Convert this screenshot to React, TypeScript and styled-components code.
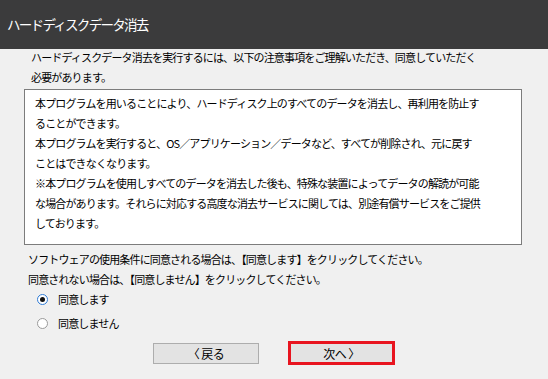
import * as React from "react";
import styled, { createGlobalStyle } from "styled-components";

const GlobalStyle = createGlobalStyle`
  html, body {
    margin: 0;
    padding: 0;
    background: #f0f0f0;
  }
  body {
    font-family: "Noto Sans CJK JP", "Liberation Sans", sans-serif;
    color: #000;
  }
`;

const Window = styled.div`
  width: 548px;
  height: 379px;
  display: flex;
  flex-direction: column;
  background: #f0f0f0;
  overflow: hidden;
`;

const TitleBar = styled.div`
  height: 49px;
  flex: none;
  display: flex;
  align-items: center;
  padding: 0 0 1px 7px;
  box-sizing: border-box;
  background: #3b3b3c;
  color: #fff;
  font-size: 13.5px;
  letter-spacing: -1.7px;
`;

const Body = styled.div`
  display: flex;
  flex-direction: column;
  padding: 0 0 0 24px;
  font-size: 11px;
  letter-spacing: -0.85px;
  line-height: 20px;
`;

const Intro = styled.p`
  margin: -2px 0 0 7px;
`;

const NoticeBox = styled.div`
  margin-top: 2px;
  width: 498px;
  height: 156px;
  box-sizing: border-box;
  border: 1px solid #7c7c7c;
  background: #fff;
  padding: 3px 0 0 10px;
`;

const NoticeLine = styled.div`
  white-space: nowrap;
`;

const Terms = styled.p`
  margin: 4px 0 0 4px;
`;

const RadioGroup = styled.div`
  display: flex;
  flex-direction: column;
  gap: 4px;
  margin: 0 0 0 13px;
`;

const RadioRow = styled.label`
  display: flex;
  align-items: center;
  gap: 10px;
  height: 20px;
`;

const RadioDot = styled.span<{ $checked: boolean }>`
  width: 11px;
  height: 11px;
  box-sizing: border-box;
  border-radius: 50%;
  border: 1px solid ${({ $checked }) => ($checked ? "#2f7bd6" : "#9a9a9a")};
  background: #fff;
  display: flex;
  align-items: center;
  justify-content: center;
  &::after {
    content: "";
    width: 5px;
    height: 5px;
    border-radius: 50%;
    background: ${({ $checked }) => ($checked ? "#111" : "transparent")};
  }
`;

const ButtonRow = styled.div`
  display: flex;
  align-items: center;
  gap: 29px;
  margin: 8px 0 0 129px;
`;

const Button = styled.button<{ $highlight?: boolean }>`
  width: ${({ $highlight }) => ($highlight ? "107px" : "106px")};
  height: ${({ $highlight }) => ($highlight ? "24px" : "21px")};
  box-sizing: border-box;
  border: ${({ $highlight }) =>
    $highlight ? "3px solid #e8141f" : "1px solid #adadad"};
  background: #e3e3e3;
  font-family: "Noto Sans CJK JP", "Liberation Sans", sans-serif;
  font-size: 12px;
  letter-spacing: -0.5px;
  color: #000;
  padding: 0;
  display: flex;
  align-items: center;
  justify-content: center;
`;

const notice = [
  "本プログラムを用いることにより、ハードディスク上のすべてのデータを消去し、再利用を防止す",
  "ることができます。",
  "本プログラムを実行すると、OS／アプリケーション／データなど、すべてが削除され、元に戻す",
  "ことはできなくなります。",
  "※本プログラムを使用しすべてのデータを消去した後も、特殊な装置によってデータの解読が可能",
  "な場合があります。それらに対応する高度な消去サービスに関しては、別途有償サービスをご提供",
  "しております。",
];

export default function App() {
  const [agree, setAgree] = React.useState(true);
  return (
    <Window>
      <GlobalStyle />
      <TitleBar>ハードディスクデータ消去</TitleBar>
      <Body>
        <Intro>
          ハードディスクデータ消去を実行するには、以下の注意事項をご理解いただき、同意していただく
          <br />
          必要があります。
        </Intro>
        <NoticeBox>
          {notice.map((line, i) => (
            <NoticeLine key={i}>{line}</NoticeLine>
          ))}
        </NoticeBox>
        <Terms>
          ソフトウェアの使用条件に同意される場合は、【同意します】をクリックしてください。
          <br />
          同意されない場合は、【同意しません】をクリックしてください。
        </Terms>
        <RadioGroup>
          <RadioRow onClick={() => setAgree(true)}>
            <RadioDot $checked={agree} />
            同意します
          </RadioRow>
          <RadioRow onClick={() => setAgree(false)}>
            <RadioDot $checked={!agree} />
            同意しません
          </RadioRow>
        </RadioGroup>
        <ButtonRow>
          <Button>〈 戻る</Button>
          <Button $highlight>次へ 〉</Button>
        </ButtonRow>
      </Body>
    </Window>
  );
}
